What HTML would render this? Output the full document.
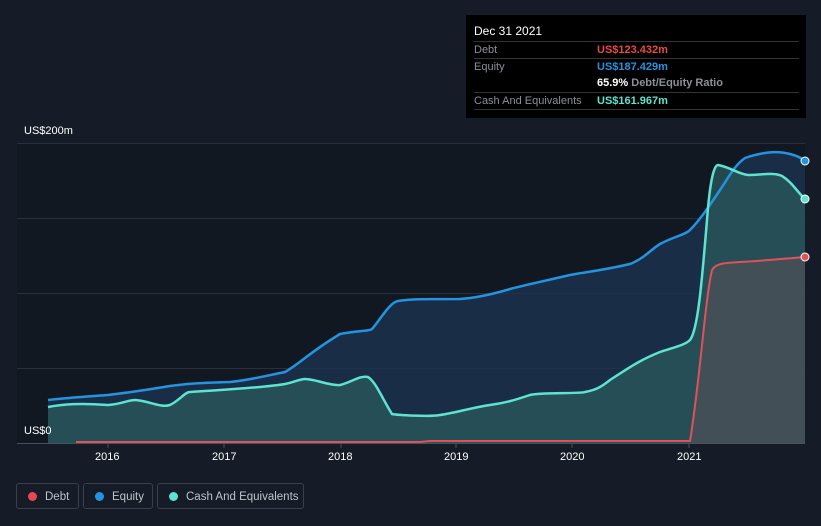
<!DOCTYPE html>
<html><head><meta charset="utf-8"><style>
html,body{margin:0;padding:0;background:#151b27;width:821px;height:526px;overflow:hidden;font-family:"Liberation Sans",sans-serif;}
.tt{position:absolute;left:466px;top:15px;width:340px;height:103px;background:#000;}
.tt .h{position:absolute;left:8px;top:9px;color:#fff;font-size:12px;}
.row{position:absolute;left:8px;width:325px;border-top:1px solid #333;height:17px;font-size:11px;color:#8b8f96;line-height:17px;white-space:nowrap;}
.row span{position:absolute;left:123px;font-weight:bold;}
.leg{position:absolute;top:483px;height:26px;border:1px solid #3a3f4a;border-radius:3px;color:#c0c3c8;font-size:11.5px;line-height:26px;box-sizing:border-box;white-space:nowrap;}
.leg i{position:absolute;left:11px;top:8px;width:9px;height:9px;border-radius:50%;}
.lbl{position:absolute;color:#fff;font-size:11px;}
</style></head><body>
<svg width="821" height="526" style="position:absolute;left:0;top:0">
<rect x="17" y="143" width="788" height="300" fill="#121822"/>
<g stroke="#2a303b" stroke-width="1">
<line x1="17" y1="143.5" x2="805" y2="143.5"/><line x1="17" y1="218.5" x2="805" y2="218.5"/>
<line x1="17" y1="293.5" x2="805" y2="293.5"/><line x1="17" y1="368.5" x2="805" y2="368.5"/>
</g>
<path d="M48,400 C64,398 80,397 108,395 C125,393 140,391 170,386 C185,384 195,383 230,382 C250,380 265,376 285,372 C298,365 310,352 340,334 C355,331 370,331 372,329 C380,320 390,302 398,301 C410,299 420,299 460,299 C475,298 490,295 510,289 C525,285 540,282 570,275 C585,272 600,271 630,264 C645,258 650,250 660,244 C675,236 685,235 690,230 C700,220 710,205 720,190 C730,175 735,165 745,158 C760,153 775,150 790,154 C798,156 802,158 805,161 L805,443 L48,443 Z" fill="#1c3550" fill-opacity="0.8"/>
<path d="M48,407 C64,404 80,403 108,405 C122,404 128,400 135,400 C150,401 160,408 170,405 C180,400 185,392 190,392 C205,391 225,390 260,387 C270,386 280,385 285,384 C295,382 300,379 305,379 C315,379 330,386 340,385 C350,383 360,375 368,377 C376,382 383,400 392,414 C397,415 430,417 440,415 C455,413 470,408 490,405 C505,403 515,400 530,395 C540,392 580,394 585,392 C595,390 600,388 610,380 C630,367 640,360 660,352 C675,347 685,345 690,340 C698,330 702,280 707,220 C710,180 714,165 718,165 C730,167 738,174 748,175 C760,175 775,172 782,176 C792,182 798,193 805,199 L805,443 L48,443 Z" fill="#2a5a5e" fill-opacity="0.75"/>
<path d="M690,442 C700,380 705,300 712,270 C716,263 725,263 740,262 C760,261 780,259 805,257 L805,443 L690,443 Z" fill="#4a5058" fill-opacity="0.8"/>
<path d="M48,400 C64,398 80,397 108,395 C125,393 140,391 170,386 C185,384 195,383 230,382 C250,380 265,376 285,372 C298,365 310,352 340,334 C355,331 370,331 372,329 C380,320 390,302 398,301 C410,299 420,299 460,299 C475,298 490,295 510,289 C525,285 540,282 570,275 C585,272 600,271 630,264 C645,258 650,250 660,244 C675,236 685,235 690,230 C700,220 710,205 720,190 C730,175 735,165 745,158 C760,153 775,150 790,154 C798,156 802,158 805,161" fill="none" stroke="#2394e0" stroke-width="2.5"/>
<path d="M48,407 C64,404 80,403 108,405 C122,404 128,400 135,400 C150,401 160,408 170,405 C180,400 185,392 190,392 C205,391 225,390 260,387 C270,386 280,385 285,384 C295,382 300,379 305,379 C315,379 330,386 340,385 C350,383 360,375 368,377 C376,382 383,400 392,414 C397,415 430,417 440,415 C455,413 470,408 490,405 C505,403 515,400 530,395 C540,392 580,394 585,392 C595,390 600,388 610,380 C630,367 640,360 660,352 C675,347 685,345 690,340 C698,330 702,280 707,220 C710,180 714,165 718,165 C730,167 738,174 748,175 C760,175 775,172 782,176 C792,182 798,193 805,199" fill="none" stroke="#5de3cf" stroke-width="2.5"/>
<path d="M76,442 L420,442 L430,441 L690,441 C700,380 705,300 712,270 C716,263 725,263 740,262 C760,261 780,259 805,257" fill="none" stroke="#e0525a" stroke-width="2"/>
<line x1="17" y1="443.5" x2="805" y2="443.5" stroke="#4a505a"/>
<g stroke="#4a505a"><line x1="108" y1="444" x2="108" y2="448"/><line x1="224" y1="444" x2="224" y2="448"/><line x1="341" y1="444" x2="341" y2="448"/><line x1="456" y1="444" x2="456" y2="448"/><line x1="572" y1="444" x2="572" y2="448"/><line x1="689" y1="444" x2="689" y2="448"/></g>
<circle cx="805" cy="161" r="4" fill="#2394e0" stroke="#fff" stroke-width="1"/>
<circle cx="805" cy="199" r="4" fill="#5de3cf" stroke="#fff" stroke-width="1"/>
<circle cx="805" cy="257" r="4" fill="#e0525a" stroke="#fff" stroke-width="1"/>
</svg>
<div class="lbl" style="left:24px;top:125px">US$200m</div>
<div class="lbl" style="left:24px;top:425px">US$0</div>
<div class="lbl" style="left:95px;top:451px">2016</div>
<div class="lbl" style="left:212px;top:451px">2017</div>
<div class="lbl" style="left:328px;top:451px">2018</div>
<div class="lbl" style="left:444px;top:451px">2019</div>
<div class="lbl" style="left:560px;top:451px">2020</div>
<div class="lbl" style="left:677px;top:451px">2021</div>
<div class="tt">
<div class="h">Dec 31 2021</div>
<div class="row" style="top:26px">Debt<span style="color:#e8484e">US$123.432m</span></div>
<div class="row" style="top:43px">Equity<span style="color:#2394e0">US$187.429m</span></div>
<div class="row" style="top:60px;border-top:none"><span style="color:#fff">65.9% <b style="color:#8b8f96">Debt/Equity Ratio</b></span></div>
<div class="row" style="top:77px">Cash And Equivalents<span style="color:#5de3cf">US$161.967m</span></div>
<div class="row" style="top:94px;height:0"></div>
</div>
<div class="leg" style="left:16px;width:63px"><i style="background:#e8484e"></i><span style="position:absolute;left:28px">Debt</span></div>
<div class="leg" style="left:83px;width:70px"><i style="background:#2394e0"></i><span style="position:absolute;left:28px">Equity</span></div>
<div class="leg" style="left:157px;width:147px"><i style="background:#5de3cf"></i><span style="position:absolute;left:28px">Cash And Equivalents</span></div>
</body></html>
